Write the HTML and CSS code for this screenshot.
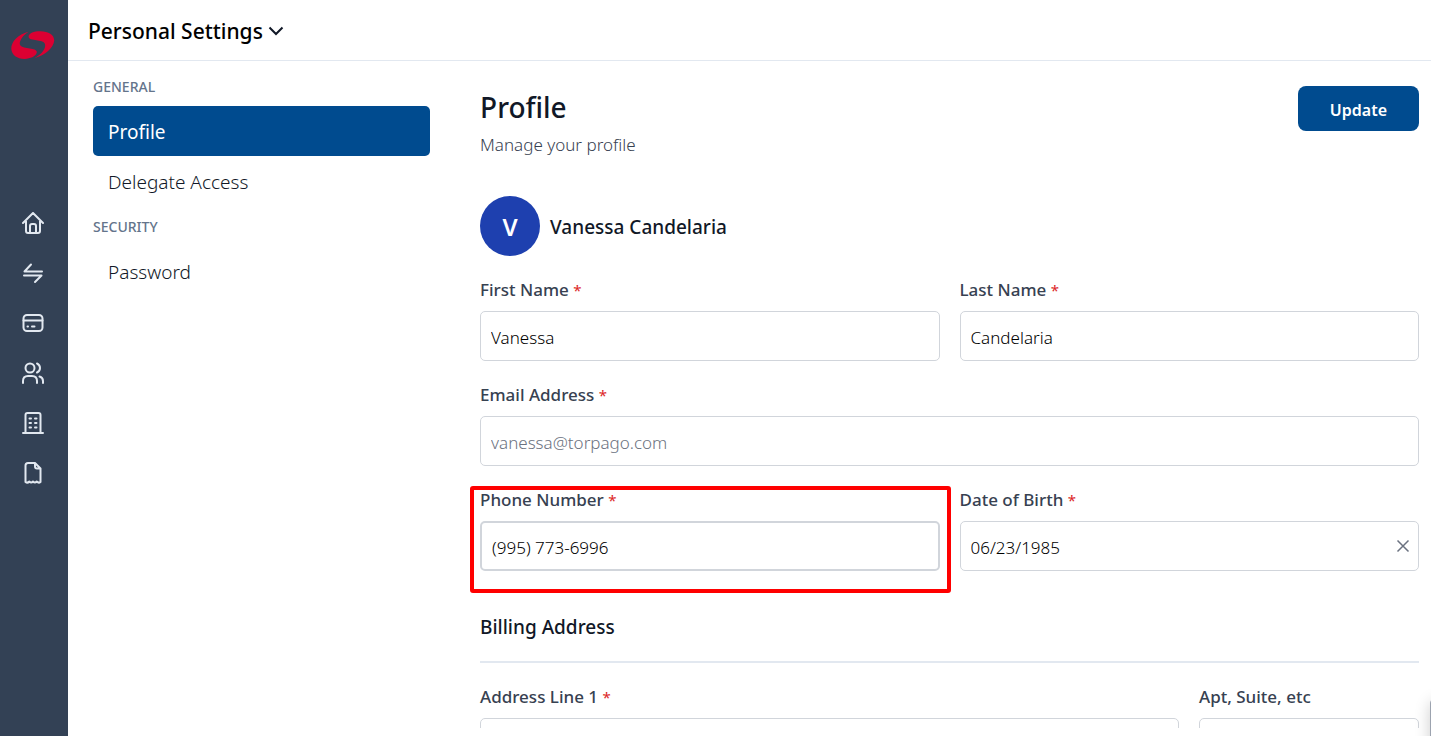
FILE: index.html
```html
<!DOCTYPE html>
<html lang="en">
<head>
    <meta charset="UTF-8">
    <meta name="viewport" content="width=device-width, initial-scale=1.0">
    <title>Personal Settings</title>
    <link rel="stylesheet" href="styles.css">
</head>
<body>
    <aside class="sidebar">
        <a class="logo" href="#" aria-label="Dashboard">
            <svg width="44" height="30" viewBox="0 0 45 30" fill="#dc0032">
                <path d="M18 1.500C7 4 0 12 0.300 19C0.800 25 6 29 14 29.300C20 29 25 27 26.300 23C27 21 25 19.500 22 19L13.500 17.600C9.500 16.800 8.300 14.500 9.300 11.500C10.500 7.500 14 4 18 1.500Z"/>
                <path d="M24 28.500C35 25.500 43.500 18 44.200 10.500C44 4.500 38.500 1 30 1C23 1 18.800 3 18 6C17.800 8 19.500 9 22 9.400L30 10.800C34 11.500 35.500 13.500 34.800 17C33.500 21.500 29.500 25.500 24 28.500Z"/>
            </svg>
        </a>
        <nav class="menu" aria-label="Main">
            <a href="#" aria-label="Home">
                <svg viewBox="0 0 22 22"><path d="M1 11L11 1l10 10M4 9v10q0 2 2 2h10q2 0 2-2V9M8 21v-7q0-2 2-2h2q2 0 2 2v7"/></svg>
            </a>
            <a href="#" aria-label="Transactions">
                <svg viewBox="0 0 22 22"><path d="M20 9.500H2.500L9 2.500M2 13.500h17.500L13 20"/></svg>
            </a>
            <a href="#" aria-label="Cards">
                <svg viewBox="0 0 22 22"><rect x="1.500" y="3" width="19" height="16" rx="3.500"/><path d="M1.500 8.500h19M5.500 14.500h.5M10 14.500h2.500"/></svg>
            </a>
            <a href="#" aria-label="People">
                <svg viewBox="0 0 22 22"><circle cx="8" cy="6" r="4.500"/><path d="M1 21v-2q0-5 5-5h4q5 0 5 5v2M15 1.500q3 1.300 3 4.500t-3 4.500M17.500 14.500q3.500 1 3.500 4.500v2"/></svg>
            </a>
            <a href="#" aria-label="Company">
                <svg viewBox="0 0 22 22"><path d="M1 21h20M3.500 21V3q0-2 2-2h11q2 0 2 2v18"/><path d="M7.500 6.500h1.500M13 6.500h1.500M7.500 11h1.500M13 11h1.500M7.500 15.500h1.500M13 15.500h1.500"/></svg>
            </a>
            <a href="#" aria-label="Receipts">
                <svg viewBox="0 0 22 22"><path d="M13 1H6Q3.500 1 3.500 3.500V20q2 1.500 3.800-.5 1.900 2 3.700 0 1.900 2 3.700 0 1.900 2 3.800.5V6.500L13 1v3.500q0 2 2 2h3.500"/></svg>
            </a>
        </nav>
    </aside>

    <div class="page">
        <header class="topbar">
            <button class="title-btn" type="button">
                Personal Settings
                <svg width="16" height="10" viewBox="0 0 16 10"><path d="M1.500 1.500L8 8l6.500-6.500"/></svg>
            </button>
        </header>

        <div class="content">
            <nav class="settings-nav" aria-label="Settings">
                <h2>GENERAL</h2>
                <a class="active" href="#">Profile</a>
                <a href="#">Delegate Access</a>
                <h2>SECURITY</h2>
                <a href="#">Password</a>
            </nav>

            <main>
                <div class="heading">
                    <div>
                        <h1>Profile</h1>
                        <p>Manage your profile</p>
                    </div>
                    <button class="update-btn" type="submit" form="profile">Update</button>
                </div>

                <div class="user">
                    <span class="avatar">V</span>
                    <span>Vanessa Candelaria</span>
                </div>

                <form id="profile">
                    <div class="row">
                        <div class="field">
                            <label for="first">First Name <span class="required">*</span></label>
                            <input type="text" id="first" value="Vanessa">
                        </div>
                        <div class="field">
                            <label for="last">Last Name <span class="required">*</span></label>
                            <input type="text" id="last" value="Candelaria">
                        </div>
                    </div>
                    <div class="row">
                        <div class="field">
                            <label for="email">Email Address <span class="required">*</span></label>
                            <input type="email" id="email" value="vanessa@torpago.com" disabled>
                        </div>
                    </div>
                    <div class="row">
                        <div class="field highlight">
                            <label for="phone">Phone Number <span class="required">*</span></label>
                            <input type="tel" id="phone" class="thick" value="(995) 773-6996">
                        </div>
                        <div class="field">
                            <label for="birth">Date of Birth <span class="required">*</span></label>
                            <div class="date">
                                <input type="text" id="birth" value="06/23/1985">
                                <button class="clear-btn" type="button" aria-label="Clear date">
                                    <svg width="14" height="14" viewBox="0 0 14 14"><path d="M1.500 1.500l11 11M12.500 1.500l-11 11"/></svg>
                                </button>
                            </div>
                        </div>
                    </div>

                    <h3>Billing Address</h3>
                    <div class="row">
                        <div class="field">
                            <label for="address">Address Line 1 <span class="required">*</span></label>
                            <input type="text" id="address">
                        </div>
                        <div class="field small">
                            <label for="apt">Apt, Suite, etc</label>
                            <input type="text" id="apt">
                        </div>
                    </div>
                </form>
            </main>
        </div>
    </div>
    <div class="drawer"></div>
</body>
</html>
```
FILE: styles.css
```css
* {
    box-sizing: border-box;
}
body {
    margin: 0;
    display: flex;
    height: 100vh;
    overflow: hidden;
    font-family: "Noto Sans", sans-serif;
    font-size: 17px;
    color: #111827;
    background: #fff;
}
h1, h2, h3, p {
    margin: 0;
}
a {
    text-decoration: none;
}
button, input {
    font: inherit;
}
button {
    border: none;
    cursor: pointer;
}
svg {
    display: block;
}
.sidebar {
    flex: 0 0 68px;
    display: flex;
    flex-direction: column;
    align-items: center;
    padding: 30px 2px 0 0;
    background: #334155;
}
.menu {
    display: flex;
    flex-direction: column;
    gap: 28px;
    margin-top: 152px;
}
.menu svg {
    width: 22px;
    height: 22px;
    fill: none;
    stroke: #e2e8f0;
    stroke-width: 2;
    stroke-linecap: round;
    stroke-linejoin: round;
}
.page {
    flex: 1;
    min-width: 0;
    display: flex;
    flex-direction: column;
    padding-bottom: 8px;
}
.topbar {
    display: flex;
    align-items: center;
    flex: 0 0 61px;
    padding: 2px 20px 0;
    border-bottom: 1px solid #e2e8f0;
}
.title-btn {
    display: flex;
    align-items: center;
    gap: 5px;
    padding: 0;
    background: none;
    font-size: 21px;
    font-weight: 500;
    color: #000;
}
.title-btn svg, .clear-btn svg {
    fill: none;
    stroke: #111827;
    stroke-width: 2;
}
.content {
    flex: 1;
    min-height: 0;
    overflow: hidden;
    display: grid;
    grid-template-columns: 14fr 39fr;
    gap: 50px;
    padding: 0 12px 0 25px;
}
.settings-nav {
    padding-top: 15px;
}
.settings-nav h2 {
    font-size: 14px;
    line-height: 22px;
    font-weight: 500;
    color: #64748b;
    margin-bottom: 8px;
}
.settings-nav a {
    display: block;
    padding: 2px 15px 0;
    font-size: 19px;
    line-height: 48px;
    font-weight: 300;
    color: #111827;
    border-radius: 5px;
}
.settings-nav a + h2 {
    margin-top: 10px;
}
.settings-nav a.active {
    background: #004b8f;
    color: #fff;
    font-weight: 400;
}
.heading {
    display: flex;
    justify-content: space-between;
    align-items: flex-start;
    padding-top: 25px;
}
h1 {
    font-size: 28px;
    line-height: 42px;
    font-weight: 500;
}
.heading p {
    padding-top: 2px;
    line-height: 30px;
    font-weight: 300;
    color: #374151;
}
.update-btn {
    height: 45px;
    padding: 2px 32px 0;
    border-radius: 8px;
    background: #004b8f;
    color: #fff;
    font-size: 16px;
    font-weight: 600;
}
.user {
    display: flex;
    align-items: center;
    gap: 10px;
    margin: 36px 0 20px;
    font-size: 19px;
    line-height: 58px;
    font-weight: 500;
}
.user span {
    padding-top: 2px;
}
.avatar {
    width: 60px;
    height: 60px;
    border-radius: 50%;
    background: #1e40af;
    color: #fff;
    font-size: 24px;
    font-weight: 600;
    text-align: center;
}
.row {
    display: flex;
    gap: 20px;
    margin-bottom: 20px;
}
.field {
    flex: 1;
    min-width: 0;
    position: relative;
}
.small {
    flex: 0 0 220px;
}
.field label {
    display: block;
    padding-top: 2px;
    line-height: 24px;
    margin-bottom: 9px;
    font-weight: 500;
    color: #374151;
}
.required {
    color: #dc2626;
    font-size: 15px;
    line-height: 1;
    font-weight: 400;
}
.field input {
    display: block;
    width: 100%;
    height: 50px;
    padding: 2px 10px 0;
    border: 1px solid #d1d5db;
    border-radius: 5px;
    background: #fff;
    font-weight: 300;
    color: #000;
}
.field input:disabled {
    color: #6b7280;
}
.field .thick {
    border-width: 2px;
}
.highlight::after {
    content: "";
    position: absolute;
    inset: 0 -11px -22px -10px;
    border: 4px solid #f00;
    border-radius: 3px;
    pointer-events: none;
}
.date {
    position: relative;
}
.clear-btn {
    position: absolute;
    top: 10px;
    right: 4px;
    padding: 8px 5px;
    background: none;
}
.clear-btn svg {
    stroke: #6b7280;
    stroke-width: 1.5;
}
h3 {
    margin: 41px 0 20px;
    padding-bottom: 19px;
    border-bottom: 2px solid #e2e8f0;
    font-size: 19px;
    line-height: 30px;
    font-weight: 500;
}
/* closed side drawer, only its edge shows */
.drawer {
    position: fixed;
    right: -19px;
    bottom: -20px;
    width: 20px;
    height: 58px;
    border: 1px solid #9ca3af;
    border-radius: 5px;
    box-shadow: 0 4px 16px rgba(0, 0, 0, 0.2);
}
```
